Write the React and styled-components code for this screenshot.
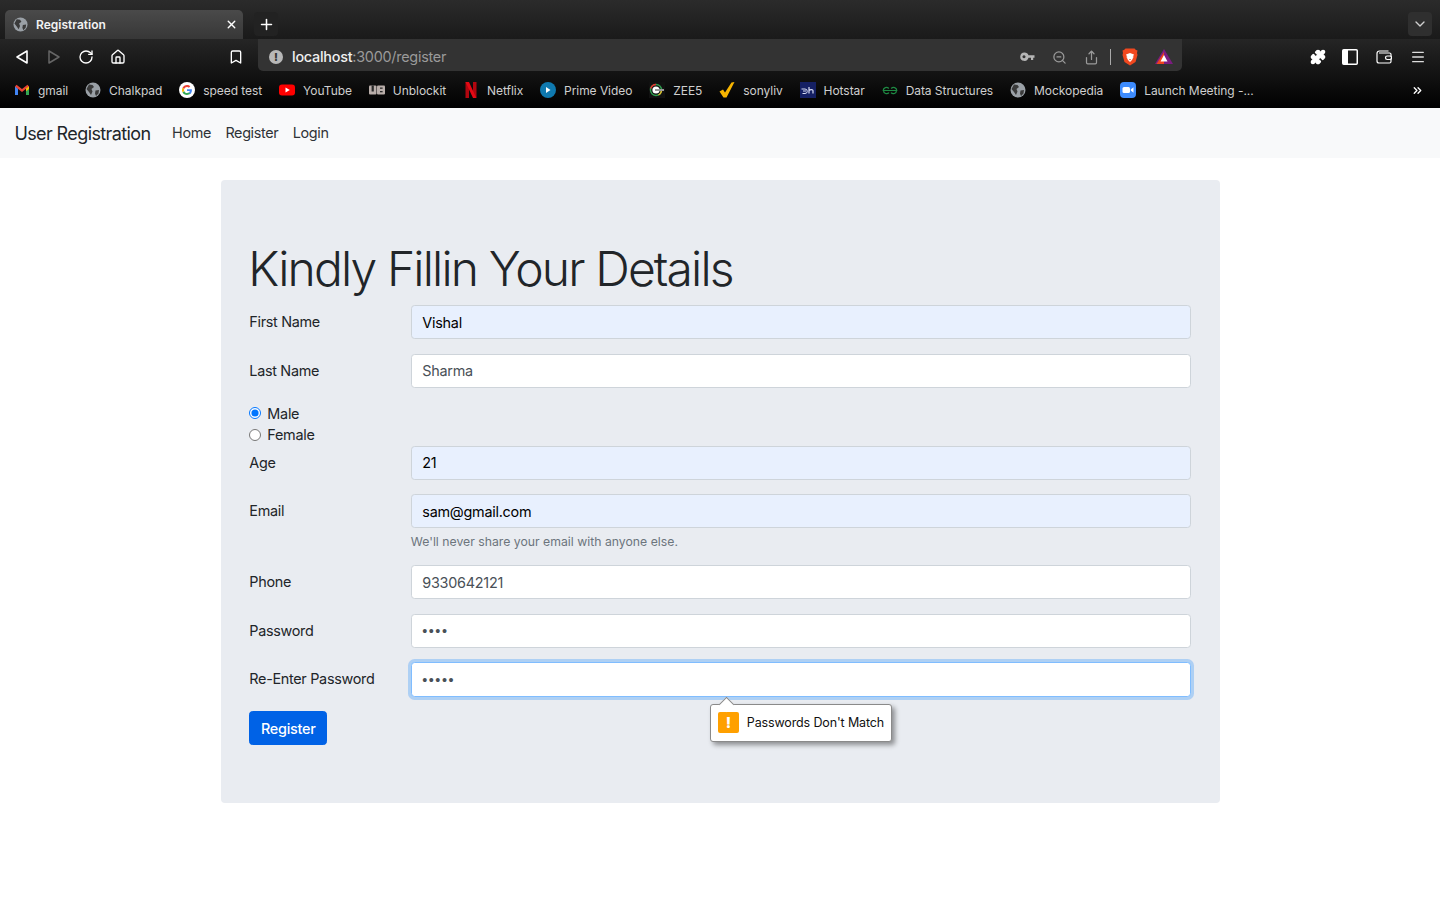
import styled, { createGlobalStyle } from "styled-components"
import { Home, Plus, X, ChevronDown, RotateCw, Bookmark, ZoomOut, Share, Puzzle, Menu, ChevronsRight } from "lucide-react"

const GlobalStyle = createGlobalStyle`
html,body{margin:0;padding:0;background:#fff;}
*{box-sizing:border-box;}
body{font-family:Inter,"Liberation Sans",sans-serif;color:#212529;}
`

const Globe = ({ size = 16, color = "#9aa0a6" }) => (
  <svg width={size} height={size} viewBox="0 0 16 16">
    <circle cx="8" cy="8" r="7.5" fill={color} />
    <path d="M4 2.500 7.500 3 9 5 6.500 7 7.500 9.500 6 13 4 10 1.500 7ZM10.500 8.500 14 8 13.500 11.500 11 14 10 11.500Z" fill="#3a3a3a" />
  </svg>
)

const Gmail = () => (
  <svg width="16" height="16" viewBox="0 0 16 16">
    <path d="M1 4v9h3V6.500Z" fill="#4285f4" />
    <path d="M15 4v9h-3V6.500Z" fill="#34a853" />
    <path d="M1 4.500 2.500 2.800 8 7l5.500-4.200L15 4.500 8 10Z" fill="#ea4335" />
    <path d="M12 6.500 15 4.200V7l-3 2.200Z" fill="#fbbc04" />
  </svg>
)

const Google = () => (
  <svg width="16" height="16" viewBox="0 0 16 16">
    <circle cx="8" cy="8" r="8" fill="#fff" />
    <path d="M12.900 8.200c0-.4 0-.7-.1-1H8v1.900h2.800c-.1.700-.5 1.200-1 1.600l1.600 1.200c.9-.9 1.500-2.200 1.500-3.700Z" fill="#4285f4" />
    <path d="M8 13c1.400 0 2.500-.5 3.400-1.200l-1.600-1.200c-.5.300-1 .5-1.800.5-1.300 0-2.400-.9-2.800-2.100L3.500 10.200C4.300 11.900 6 13 8 13Z" fill="#34a853" />
    <path d="M5.200 9C5 8.300 5 7.700 5.200 7L3.500 5.800c-.7 1.400-.7 3 0 4.400Z" fill="#fbbc04" />
    <path d="M8 4.900c.8 0 1.400.3 1.900.8l1.400-1.400C10.500 3.500 9.300 3 8 3 6 3 4.300 4.100 3.500 5.800L5.200 7C5.600 5.800 6.700 4.900 8 4.900Z" fill="#ea4335" />
  </svg>
)

const Youtube = () => (
  <svg width="16" height="16" viewBox="0 0 16 16">
    <rect y="2.500" width="16" height="11" rx="3" fill="#f00" />
    <path d="M6.500 5.500 10.800 8l-4.300 2.500Z" fill="#fff" />
  </svg>
)

const Unblock = () => (
  <svg width="16" height="16" viewBox="0 0 16 16">
    <rect y="3.500" width="7.500" height="9" rx="1" fill="#b9aeaa" />
    <rect x="8" y="3.500" width="8" height="9" rx="1" fill="#b9aeaa" />
    <rect x="2.600" y="3.500" width="2.200" height="6" fill="#2a2a2a" />
    <rect x="11" y="5.500" width="2.600" height="1.300" fill="#2a2a2a" />
    <rect x="11" y="9" width="2.600" height="1.300" fill="#2a2a2a" />
  </svg>
)

const Netflix = () => (
  <svg width="16" height="16" viewBox="0 0 16 16">
    <path d="M2.500 0H6V16L2.500 16.500Z" fill="#b1060f" />
    <path d="M10 0H13.500V16.500L10 16Z" fill="#b1060f" />
    <path d="M2.500 0H6L13.500 16.500 10 16Z" fill="#e50914" />
  </svg>
)

const Prime = () => (
  <svg width="16" height="16" viewBox="0 0 16 16">
    <circle cx="8" cy="8" r="8" fill="#0f79af" />
    <path d="M6 5l4.500 3L6 11Z" fill="#fff" />
  </svg>
)

const Zee = () => (
  <svg width="16" height="16" viewBox="0 0 16 16">
    <rect width="16" height="16" fill="#111" />
    <circle cx="7" cy="8" r="5.500" fill="none" stroke="#2e9e4f" strokeWidth="1.400" />
    <path d="M7 2.500A5.500 5.500 0 0 0 1.800 6.500" fill="none" stroke="#e2332f" strokeWidth="1.400" />
    <path d="M12.500 8a5.500 5.500 0 0 1-3 5" fill="none" stroke="#e2b92f" strokeWidth="1.400" />
    <circle cx="7" cy="8" r="3.600" fill="#fff" />
    <rect x="6" y="7" width="9" height="2" fill="#999" />
  </svg>
)

const Sony = () => (
  <svg width="16" height="16" viewBox="0 0 16 16">
    <path d="M0.500 9.500 4 7.500 6 10.500 12.500 0.500 15.500 0 7.500 15.500H4.500Z" fill="#f7b500" />
  </svg>
)

const Hotstar = () => (
  <svg width="16" height="16" viewBox="0 0 16 16">
    <rect width="16" height="16" fill="#152064" />
    <path d="M1.500 7H5a2 2 0 0 1 0 4.500H2.500M3 9h3" fill="none" stroke="#d7dcf5" strokeWidth="1" />
    <path d="M9 5v6.500M9 8.500c1-1.200 4-1.200 4 0v3" fill="none" stroke="#d7dcf5" strokeWidth="1.200" />
  </svg>
)

const Geeks = () => (
  <svg width="16" height="16" viewBox="0 0 16 16">
    <path d="M8 8.500H1.200a3.200 3.200 0 0 1 5.600-2M1.500 8.500a3.200 3.200 0 0 0 5.500 2.200M8 8.500h6.800a3.200 3.200 0 0 0-5.600-2M14.500 8.500a3.200 3.200 0 0 1-5.500 2.200" fill="none" stroke="#1e8a43" strokeWidth="1.200" />
  </svg>
)

const Zoom = () => (
  <svg width="16" height="16" viewBox="0 0 16 16">
    <rect width="16" height="16" rx="4" fill="#3d8bfd" />
    <rect x="2.500" y="5" width="7.500" height="6" rx="1.500" fill="#fff" />
    <path d="M10.800 7.500 13.500 5.300v5.400L10.800 8.500Z" fill="#fff" />
  </svg>
)

const Brave = () => (
  <svg width="16" height="18" viewBox="0 0 16 18">
    <path d="M3.500 0.500h9L14 2l1.500.5L15 5l.5 2-2 7L8 17.500 2.500 14l-2-7L1 5 .5 2.500 2 2Z" fill="#f1481f" />
    <path d="M4 6.500 8 5l4 1.500-1.500 3L12 8 10 12 8 14 6 12 4 8l1.500 1.500Z" fill="#fff" />
    <path d="M7 11h2L8 12.500Z" fill="#f1481f" />
  </svg>
)

const Bat = () => (
  <svg width="18" height="16" viewBox="0 0 18 16">
    <path d="M9 0 18 15H0Z" fill="#7b1c80" />
    <path d="M9 3 1.500 15H9Z" fill="#f0421d" />
    <path d="M9 6 5.500 12.500h7Z" fill="#fff" />
  </svg>
)

const KeyIcon = () => (
  <svg width="15" height="10" viewBox="0 0 15 10">
    <path fillRule="evenodd" d="M4.500 0.500a4.200 4.200 0 0 1 4 2.800H14.500V5.800H13.200V8H11V5.800H8.500a4.200 4.200 0 1 1-4-5.300ZM4 3.300a1.500 1.500 0 1 0 .01 0Z" fill="#b5b5b5" />
  </svg>
)

const SidebarIcon = () => (
  <svg width="16" height="16" viewBox="0 0 16 16">
    <rect x="0.750" y="0.750" width="14.500" height="14.500" fill="none" stroke="#fff" strokeWidth="1.500" rx="1" />
    <rect x="1" y="1" width="5" height="14" fill="#fff" />
  </svg>
)

const WalletIcon = () => (
  <svg width="16" height="14" viewBox="0 0 16 14">
    <path d="M1 3.500C1 2 2 1 3.500 1h9M1 3.500V11c0 1.200.8 2 2 2h10.500c.8 0 1.500-.7 1.500-1.500v-7C15 3.700 14.300 3 13.500 3H3" fill="none" stroke="#fff" strokeWidth="1.200" />
    <rect x="9.500" y="6" width="6" height="3.500" rx="1.700" fill="#222" stroke="#fff" strokeWidth="1.200" />
  </svg>
)

const bookmarks = [
  { name: "gmail", icon: <Gmail /> },
  { name: "Chalkpad", icon: <Globe /> },
  { name: "speed test", icon: <Google /> },
  { name: "YouTube", icon: <Youtube /> },
  { name: "Unblockit", icon: <Unblock /> },
  { name: "Netflix", icon: <Netflix /> },
  { name: "Prime Video", icon: <Prime /> },
  { name: "ZEE5", icon: <Zee /> },
  { name: "sonyliv", icon: <Sony /> },
  { name: "Hotstar", icon: <Hotstar /> },
  { name: "Data Structures", icon: <Geeks /> },
  { name: "Mockopedia", icon: <Globe /> },
  { name: "Launch Meeting -...", icon: <Zoom /> },
]

const fields = {
  first: { label: "First Name", value: "Vishal", filled: true },
  last: { label: "Last Name", value: "Sharma" },
  age: { label: "Age", value: "21", filled: true },
  email: { label: "Email", value: "sam@gmail.com", filled: true, hint: "We'll never share your email with anyone else." },
  phone: { label: "Phone", value: "9330642121" },
  password: { label: "Password", value: "1234", type: "password" },
}

function Field({ label, value, filled, hint, type = "text" }) {
  return (
    <Row>
      <Label>{label}</Label>
      <div>
        {type === "password" ? <SecretInput type={type} defaultValue={value} /> : <Input type={type} defaultValue={value} $filled={filled} />}
        {hint ? <Hint>{hint}</Hint> : <></>}
      </div>
    </Row>
  )
}

export default function App() {
  return (
    <>
      <GlobalStyle />
      <Chrome>
        <TabStrip>
          <Tab>
            <Globe size={15} />
            <TabTitle>Registration</TabTitle>
            <X size={13} color="#fff" strokeWidth={2.5} />
          </Tab>
          <NewTab><Plus size={17} color="#fff" strokeWidth={2.2} /></NewTab>
          <TabMenu><ChevronDown size={16} color="#d0d0d0" /></TabMenu>
        </TabStrip>
        <Toolbar>
          <NavButtons>
            <NavBtn>
              <svg width="14" height="16" viewBox="0 0 14 16"><path d="M12 2v12L2 8Z" fill="none" stroke="#fff" strokeWidth="1.600" strokeLinejoin="round" /></svg>
            </NavBtn>
            <NavBtn>
              <svg width="14" height="16" viewBox="0 0 14 16"><path d="M2 2v12l10-6Z" fill="none" stroke="#666" strokeWidth="1.500" strokeLinejoin="round" /></svg>
            </NavBtn>
            <NavBtn><RotateCw size={16} color="#fff" strokeWidth={2} /></NavBtn>
            <NavBtn><Home size={16} color="#fff" strokeWidth={2} /></NavBtn>
          </NavButtons>
          <BookmarkBtn><Bookmark size={16} color="#fff" strokeWidth={2} /></BookmarkBtn>
          <UrlBar>
            <InfoDot>!</InfoDot>
            <UrlText><strong>localhost</strong>:3000/register</UrlText>
            <UrlIcons>
              <KeyIcon />
              <ZoomOut size={15} color="#9a9a9a" />
              <Share size={15} color="#9a9a9a" />
              <Divider />
              <Brave />
              <Bat />
            </UrlIcons>
          </UrlBar>
          <ToolIcons>
            <Puzzle size={16} color="#fff" fill="#fff" />
            <SidebarIcon />
            <WalletIcon />
            <Menu size={16} color="#ddd" />
          </ToolIcons>
        </Toolbar>
        <BookmarkBar>
          {bookmarks.map((b) => (
            <BookmarkItem key={b.name}>
              {b.icon}
              <span>{b.name}</span>
            </BookmarkItem>
          ))}
          <MoreBookmarks><ChevronsRight size={13} color="#fff" strokeWidth={2.5} /></MoreBookmarks>
        </BookmarkBar>
      </Chrome>

      <Navbar>
        <Brand>User Registration</Brand>
        <NavLink>Home</NavLink>
        <NavLink>Register</NavLink>
        <NavLink>Login</NavLink>
      </Navbar>

      <Card>
        <Title>Kindly Fillin Your Details</Title>
        <Field {...fields.first} />
        <Field {...fields.last} />
        <Radios>
          <RadioLine>
            <Radio type="radio" name="gender" defaultChecked />
            Male
          </RadioLine>
          <RadioLine>
            <Radio type="radio" name="gender" />
            Female
          </RadioLine>
        </Radios>
        <Field {...fields.age} />
        <Field {...fields.email} />
        <Field {...fields.phone} />
        <Field {...fields.password} />
        <Row>
          <Label>Re-Enter Password</Label>
          <InputWrap>
            <FocusedInput type="password" defaultValue="12345" />
            <Bubble>
              <BubbleArrow />
              <WarnIcon>!</WarnIcon>
              Passwords Don't Match
            </Bubble>
          </InputWrap>
        </Row>
        <Submit>Register</Submit>
      </Card>
    </>
  )
}

const Chrome = styled.div`
height:108px;background:#000;
display:flex;flex-direction:column;
`
const TabStrip = styled.div`
height:39px;padding:0 8px 0 5px;
display:flex;align-items:flex-end;
background:linear-gradient(#2b2b2b,#1a1a1a);
`
const Tab = styled.div`
width:238px;height:29px;padding:0 5px 0 8px;
display:flex;align-items:center;
border-radius:5px 5px 0 0;
background:linear-gradient(#4a4a4a,#373737);
`
const TabTitle = styled.span`
flex:1;margin-left:8px;
font-size:12px;font-weight:600;color:#f2f2f2;
`
const NewTab = styled.div`
width:24px;height:24px;margin:0 0 3px 11px;
display:flex;align-items:center;justify-content:center;
border-radius:4px;background:#222;
`
const TabMenu = styled.div`
width:24px;height:24px;margin:0 0 3px auto;
display:flex;align-items:center;justify-content:center;
border-radius:4px;background:#2f2f2f;
`
const Toolbar = styled.div`
height:33px;padding-left:6px;
display:flex;align-items:flex-start;
background:linear-gradient(#252525,#141414);
`
const NavButtons = styled.div`
display:flex;
`
const NavBtn = styled.div`
width:32px;height:36px;
display:flex;align-items:center;justify-content:center;
`
const BookmarkBtn = styled.div`
width:32px;height:36px;margin-left:86px;
display:flex;align-items:center;justify-content:center;
`
const UrlBar = styled.div`
width:924px;height:32px;margin-left:6px;padding:4px 9px 0 11px;
display:flex;align-items:center;
border-radius:0 0 5px 5px;background:#333;
`
const InfoDot = styled.div`
width:14px;height:14px;
display:flex;align-items:center;justify-content:center;
border-radius:50%;background:#b8b8b8;color:#333;
font-size:11px;font-weight:800;
`
const UrlText = styled.div`
flex:1;margin:-1px 0 0 9px;
font-size:14.400px;letter-spacing:-.25px;color:#9a9a9a;
strong{font-weight:500;color:#f0f0f0;}
`
const UrlIcons = styled.div`
display:flex;align-items:center;gap:17px;
`
const Divider = styled.div`
width:1px;height:16px;margin:0 -6px;background:#aaa;
`
const ToolIcons = styled.div`
height:36px;margin-left:128px;
display:flex;align-items:center;gap:18px;
svg:first-child{margin-right:-2px;}
`
const BookmarkBar = styled.div`
flex:1;padding:0 15px 0 14px;
display:flex;align-items:center;gap:16.900px;
background:linear-gradient(#141414,#000);
`
const BookmarkItem = styled.div`
display:flex;align-items:center;gap:8px;
font-size:12px;letter-spacing:-.05px;color:#cfcfcf;white-space:nowrap;
`
const MoreBookmarks = styled.div`
margin-left:auto;margin-right:1px;
display:flex;
`
const Navbar = styled.nav`
height:50px;padding:0 14.400px;
display:flex;align-items:center;
background:#f8f9fa;
`
const Brand = styled.div`
margin-right:21.500px;
font-size:18px;letter-spacing:-.6px;color:#212529;
`
const NavLink = styled.a`
margin:0 14.400px 1px 0;
font-size:14.400px;letter-spacing:-.35px;color:#2f3337;
`
const Card = styled.main`
width:999px;height:623px;margin:22px auto 0;padding:61.400px 28.800px 0;
border-radius:4px;background:#e9ecf1;
`
const Title = styled.h1`
margin:-1px 0 7.200px -1px;
font-size:48px;line-height:57.600px;font-weight:300;letter-spacing:-1.860px;color:#212529;
`
const Row = styled.div`
display:grid;grid-template-columns:161.500px 1fr;align-items:start;
margin-bottom:14.400px;
`
const Label = styled.label`
height:34.200px;line-height:34.800px;
font-size:14.400px;letter-spacing:-.3px;color:#212529;
`
const Input = styled.input`
display:block;width:100%;height:34.200px;padding:0 10.500px;
border:1px solid #ced4da;border-radius:3.600px;outline:0;
font-family:inherit;font-size:14.400px;letter-spacing:-.25px;
color:${(p) => (p.$filled ? "#000" : "#495057")};
background:${(p) => (p.$filled ? "#e8f0fe" : "#fff")};
`
const SecretInput = styled(Input)`
font-family:"Liberation Sans",sans-serif;letter-spacing:1.500px;
`
const Hint = styled.div`
margin-top:3.600px;
font-size:12.250px;line-height:19px;color:#6c757d;
`
const InputWrap = styled.div`
position:relative;
`
const FocusedInput = styled(SecretInput)`
border-color:#80bdff;
box-shadow:0 0 0 3px rgba(0,123,255,.25);
`
const Bubble = styled.div`
position:absolute;left:299px;top:41.500px;z-index:2;
height:38px;width:182px;padding-left:7px;
display:flex;align-items:center;gap:8px;
border:1px solid #8a8a8a;border-radius:3px;
background:#fff;box-shadow:3px 3px 5px rgba(0,0,0,.4);
font-size:12.500px;letter-spacing:-.13px;color:#111;white-space:nowrap;
`
const BubbleArrow = styled.div`
position:absolute;left:10px;top:-6px;
width:11px;height:11px;
transform:rotate(45deg);
border-left:1px solid #8a8a8a;border-top:1px solid #8a8a8a;background:#fff;
`
const WarnIcon = styled.div`
width:21px;height:21px;
display:flex;align-items:center;justify-content:center;
border-radius:2px;background:#ffa000;color:#fff;
font-size:15px;font-weight:800;
`
const Radios = styled.div`
`
const RadioLine = styled.label`
display:flex;align-items:center;height:21.600px;
font-size:14.400px;letter-spacing:-.25px;color:#212529;
`
const Radio = styled.input`
width:12px;height:12px;margin:0 6px 0 0;
`
const Submit = styled.button`
width:78px;height:34.200px;padding:0;
border:1px solid #0062e6;border-radius:3.600px;
background:#0062e6;color:#fff;
font-family:inherit;font-size:14.400px;font-weight:500;letter-spacing:-.25px;
`
